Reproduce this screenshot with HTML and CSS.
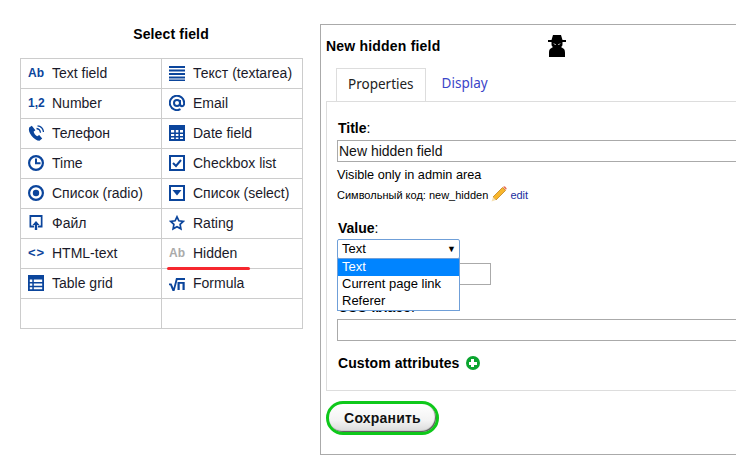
FILE: index.html
```html
<!DOCTYPE html>
<html lang="ru">
<head>
    <meta charset="UTF-8">
    <title>Select field</title>
    <link rel="stylesheet" href="styles.css">
</head>
<body>
    <div class="picker">
        <h2 class="picker-title">Select field</h2>
        <table class="fields">
            <tr>
                <td><div class="cell"><span class="ico ico-text">Ab</span>Text field</div></td>
                <td><div class="cell"><svg class="ico" viewBox="0 0 16 16"><path d="M0 1h16v2H0zM0 4.500h16v2H0zM0 8h16v2H0zM0 11.500h16v2H0zM0 14.500h16v1.500H0z"/></svg>Текст (textarea)</div></td>
            </tr>
            <tr>
                <td><div class="cell"><span class="ico ico-text">1,2</span>Number</div></td>
                <td><div class="cell"><svg class="ico" viewBox="0 0 16 16"><path fill="none" stroke="currentColor" stroke-width="2" d="M11.500 14.200A7.200 7.200 0 1 1 15.200 8c0 2-.8 3.200-2.100 3.200S11 10 11 8.500V5m0 3a3 3 0 1 1-6 0 3 3 0 0 1 6 0z"/></svg>Email</div></td>
            </tr>
            <tr>
                <td><div class="cell"><svg class="ico" viewBox="0 0 16 16"><path d="M3.800.8 1.200 2.600C.3 5 1.300 8 3.500 10.800c2.300 2.900 5.300 5 8 5l2.700-2.200-3-3.500-2 1.200C7.700 10.700 6 8.500 5.600 6.800l1.800-1.500z"/><path fill="none" stroke="currentColor" stroke-width="1.300" d="M8.500 3.500c2.200.3 3.800 2 4 4.200M9.500.8c3.300.4 5.700 3 6 6.200"/></svg>Телефон</div></td>
                <td><div class="cell"><svg class="ico" viewBox="0 0 16 16"><path fill-rule="evenodd" d="M0 0h16v16H0zM2 5v2.500h3.200V5zm4.800 0v2.500h2.600V5zm4.200 0v2.500h3V5zM2 9v2h3.200V9zm4.800 0v2h2.600V9zM11 9v2h3V9zm-9 3.500V14h3.200v-1.500zm4.800 0V14h2.600v-1.500zm4.200 0V14h3v-1.500z"/></svg>Date field</div></td>
            </tr>
            <tr>
                <td><div class="cell"><svg class="ico" viewBox="0 0 16 16"><path fill-rule="evenodd" d="M8 0a8 8 0 1 1 0 16A8 8 0 0 1 8 0zm0 2.200a5.800 5.800 0 1 0 0 11.600A5.800 5.800 0 0 0 8 2.200zM7 3.500h2v3.800h3.500v2H7z"/></svg>Time</div></td>
                <td><div class="cell"><svg class="ico" viewBox="0 0 16 16"><path fill-rule="evenodd" d="M0 0h16v16H0zm2 2v12h12V2z"/><path fill="none" stroke="currentColor" stroke-width="2" d="m4 8 3 3 5-6"/></svg>Checkbox list</div></td>
            </tr>
            <tr>
                <td><div class="cell"><svg class="ico" viewBox="0 0 16 16"><path fill-rule="evenodd" d="M8 0a8 8 0 1 1 0 16A8 8 0 0 1 8 0zm0 2.200a5.800 5.800 0 1 0 0 11.600A5.800 5.800 0 0 0 8 2.200z"/><circle cx="8" cy="8" r="3.200"/></svg>Список (radio)</div></td>
                <td><div class="cell"><svg class="ico" viewBox="0 0 16 16"><path fill-rule="evenodd" d="M0 0h16v16H0zm2 2v12h12V2z"/><path d="M3.500 5h9L8 10.500z"/></svg>Список (select)</div></td>
            </tr>
            <tr>
                <td><div class="cell"><svg class="ico" viewBox="0 0 16 16"><path fill-rule="evenodd" d="M1.500 0h13v12.500H10v-2h2.800V2H3.200v8.500H6v2H1.500z"/><path d="M8 6l3.500 4H9.200v5H6.800v-5H4.500z"/></svg>Файл</div></td>
                <td><div class="cell"><svg class="ico" viewBox="0 0 16 16"><path fill="none" stroke="currentColor" stroke-width="1.700" d="m8 1.800 1.900 4 4.400.6-3.200 3 .8 4.400L8 11.700l-3.900 2.100.8-4.400-3.200-3 4.400-.6z"/></svg>Rating</div></td>
            </tr>
            <tr>
                <td><div class="cell"><span class="ico ico-text ico-code">&lt;&gt;</span>HTML-text</div></td>
                <td class="marked"><div class="cell"><span class="ico ico-text ico-grey">Ab</span>Hidden</div></td>
            </tr>
            <tr>
                <td><div class="cell"><svg class="ico" viewBox="0 0 16 16"><path fill-rule="evenodd" d="M0 0h16v16H0zm1.800 4.500v2.500h2.500V4.500zm4 0v2.500h8.400V4.500zm-4 4v2.200h2.500V8.500zm4 0v2.200h8.400V8.500zm-4 3.700v2h2.500v-2zm4 0v2h8.400v-2z"/></svg>Table grid</div></td>
                <td><div class="cell"><svg class="ico" viewBox="0 0 16 16"><path d="M0 8.500h2.500L4.500 13 7 3h9v2H8.500L5.500 16h-2L1.200 10.300H0z"/><path d="M8.500 7h2.200v8H8.500zM13.500 7h2.200v8h-2.200z"/><path d="M9.500 7h5v1.800h-5z"/></svg>Formula</div></td>
            </tr>
            <tr>
                <td></td>
                <td></td>
            </tr>
        </table>
    </div>

    <div class="panel">
        <div class="panel-head">
            <h3 class="panel-title">New hidden field</h3>
            <svg class="spy" viewBox="0 0 20 22"><path d="M6 0h8l1.500 5H19v2h-3.500v2c0 1.500-.5 2.500-1.500 3l3 2c.7.700 1 2 1 4v4H2v-4c0-2 .3-3.300 1-4l3-2c-1-.5-1.500-1.500-1.500-3V7H1V5h3.500z"/><path fill="#fff" d="M6 8.200 9 9.300 8.300 10zM14 8.200 11 9.300l.7.7z"/></svg>
        </div>
        <div class="tabs">
            <span class="tab tab-active">Properties</span>
            <span class="tab">Display</span>
        </div>
        <div class="pane">
            <label class="label"><b>Title</b>:</label>
            <input class="input input-wide" type="text" value="New hidden field">
            <p class="note">Visible only in admin area</p>
            <p class="code">Символьный код: new_hidden
                <svg class="pencil" viewBox="0 0 16 16"><path fill="#f8b62c" stroke="#b9770e" stroke-width=".7" d="M11.500 1.500 14.500 4.500 5 14 2 11z"/><path fill="#e8735a" d="M12 1l1-.8c.8-.3 2.500 1.400 2.600 2.400L15 4z"/><path fill="#f6e0b0" d="M2 11 5 14 .5 15.500z"/></svg>
                <a class="edit">edit</a></p>

            <label class="label label-value"><b>Value</b>:</label>
            <div class="value-box">
                <div class="select">Text<span class="arrow">▼</span></div>
                <ul class="options">
                    <li class="option-on">Text</li>
                    <li>Current page link</li>
                    <li>Referer</li>
                </ul>
                <input class="input input-short" type="text">
            </div>

            <label class="label label-seo"><b>CSS-класс</b>:</label>
            <input class="input input-wide input-blank" type="text">

            <div class="attrs">
                <b class="attrs-name">Custom attributes</b>
                <span class="plus"></span>
            </div>
        </div>
        <button class="save">Сохранить</button>
    </div>
</body>
</html>
```

FILE: styles.css
```css
html, body {
    height: 470px;
    overflow: hidden;
}
body {
    margin: 0;
    background: #fff;
    color: #000;
    font-family: "Liberation Sans", Arial, sans-serif;
    font-size: 14px;
    display: flex;
    align-items: flex-start;
}
.picker {
    width: 284px;
    margin: 26px 0 0 20px;
    flex-shrink: 0;
}
.picker-title {
    margin: 0 0 15px;
    padding-left: 18px;
    font-size: 14px;
    line-height: 17px;
    letter-spacing: .15px;
    text-align: center;
}
.fields {
    border-collapse: collapse;
    table-layout: fixed;
    width: 283px;
}
.fields td {
    height: 29px;
    padding: 0 0 0 7px;
    border: 1px solid #ccc;
    position: relative;
    color: #1a1a2a;
}
.cell {
    display: flex;
    align-items: center;
    box-sizing: border-box;
    height: 29px;
    padding-bottom: 1px;
    white-space: nowrap;
}
.ico {
    flex-shrink: 0;
    width: 16px;
    height: 16px;
    margin-right: 8px;
    fill: #0b459c;
    color: #0b459c;
}
.ico-text {
    font-size: 12px;
    font-weight: bold;
    line-height: 16px;
    white-space: nowrap;
}
.ico-code {
    font-size: 13px;
    letter-spacing: 1px;
}
.ico-grey {
    color: #aaa;
}
.marked::after {
    content: "";
    position: absolute;
    left: 5px;
    bottom: -2px;
    width: 83px;
    height: 3px;
    border-radius: 2px;
    background: #f6272e;
}
.panel {
    width: 480px;
    height: 431px;
    margin: 24px 0 0 16px;
    padding: 0 0 0 5px;
    border: 1px solid #aaa;
    border-right: 0;
    flex-shrink: 0;
    box-sizing: border-box;
}
.panel-head {
    display: flex;
    align-items: center;
    box-sizing: border-box;
    height: 43px;
    padding-bottom: 2px;
}
.panel-title {
    margin: 0;
    font-size: 14px;
    letter-spacing: .2px;
    width: 221px;
    white-space: nowrap;
}
.spy {
    width: 20px;
    height: 22px;
}
.tabs {
    display: flex;
    padding-left: 10px;
    font-family: "Noto Sans", sans-serif;
    font-size: 13.500px;
    height: 33px;
}
.tab {
    padding: 6px 16px 0;
    color: #3b45c8;
}
.tab-active {
    padding: 6px 11px 0;
    color: #222;
    background: #fff;
    border: 1px solid #ddd;
    border-bottom: 0;
    height: 26px;
    margin-bottom: -1px;
    position: relative;
}
.pane {
    height: 290px;
    padding: 18px 0 0 10px;
    border: 1px solid #ddd;
    border-right: 0;
    box-sizing: border-box;
}
.label {
    display: block;
    padding-left: 1px;
    line-height: 17px;
}
.input {
    display: block;
    box-sizing: border-box;
    height: 22px;
    margin: 3px 0 0;
    padding: 0 1px;
    border: 1px solid #aaa;
    font: 14px "Liberation Sans", Arial, sans-serif;
    background: #fff;
    color: #111;
}
.input-wide {
    width: 420px;
}
.note {
    margin: 5px 0 0;
    font-size: 12.700px;
    line-height: 16px;
}
.code {
    margin: 3px 0 0;
    font-size: 11px;
    line-height: 16px;
    white-space: nowrap;
}
.pencil {
    width: 16px;
    height: 16px;
    vertical-align: -3px;
}
.edit {
    color: #1a2fa0;
}
.label-value {
    margin-top: 17px;
}
.value-box {
    position: relative;
    height: 46px;
    margin-top: 2px;
}
.select {
    position: absolute;
    z-index: 2;
    top: 0;
    left: 0;
    box-sizing: border-box;
    width: 123px;
    height: 20px;
    padding-left: 4px;
    border: 1px solid #6f9fd8;
    border-radius: 2px;
    font-size: 13px;
    line-height: 18px;
    background: #fff;
}
.arrow {
    position: absolute;
    right: 3px;
    top: 0;
    font-size: 9px;
}
.options {
    position: absolute;
    z-index: 2;
    top: 19px;
    left: 0;
    box-sizing: border-box;
    width: 123px;
    margin: 0;
    padding: 0;
    list-style: none;
    border: 1px solid #6f9fd8;
    background: #fff;
    font-size: 13px;
    line-height: 16px;
}
.options li {
    padding: 0 0 1px 4px;
}
.options .option-on {
    background: #0084ff;
    color: #fff;
}
.input-short {
    position: absolute;
    top: 24px;
    left: 0;
    width: 154px;
    margin: 0;
}
.label-seo {
    margin-top: 14px;
}
.attrs {
    display: flex;
    align-items: center;
    gap: 6px;
    margin-top: 13px;
    line-height: 18px;
}
.attrs-name {
    padding-left: 1px;
    letter-spacing: .1px;
}
.plus {
    width: 14px;
    height: 14px;
    border-radius: 50%;
    background:
        linear-gradient(#fff, #fff) center / 8px 3px no-repeat,
        linear-gradient(#fff, #fff) center / 3px 8px no-repeat,
        #0aa52f;
}
.save {
    display: block;
    box-sizing: border-box;
    width: 113px;
    height: 34px;
    margin-top: 10px;
    border: 3px solid #0ec81a;
    border-radius: 17px;
    background: linear-gradient(#fff, #f3f3f3 60%, #d8d8d8);
    box-shadow: inset -1px -1px 1px #555;
    font: bold 14px "Liberation Sans", Arial, sans-serif;
    letter-spacing: .2px;
    color: #111;
}
```
